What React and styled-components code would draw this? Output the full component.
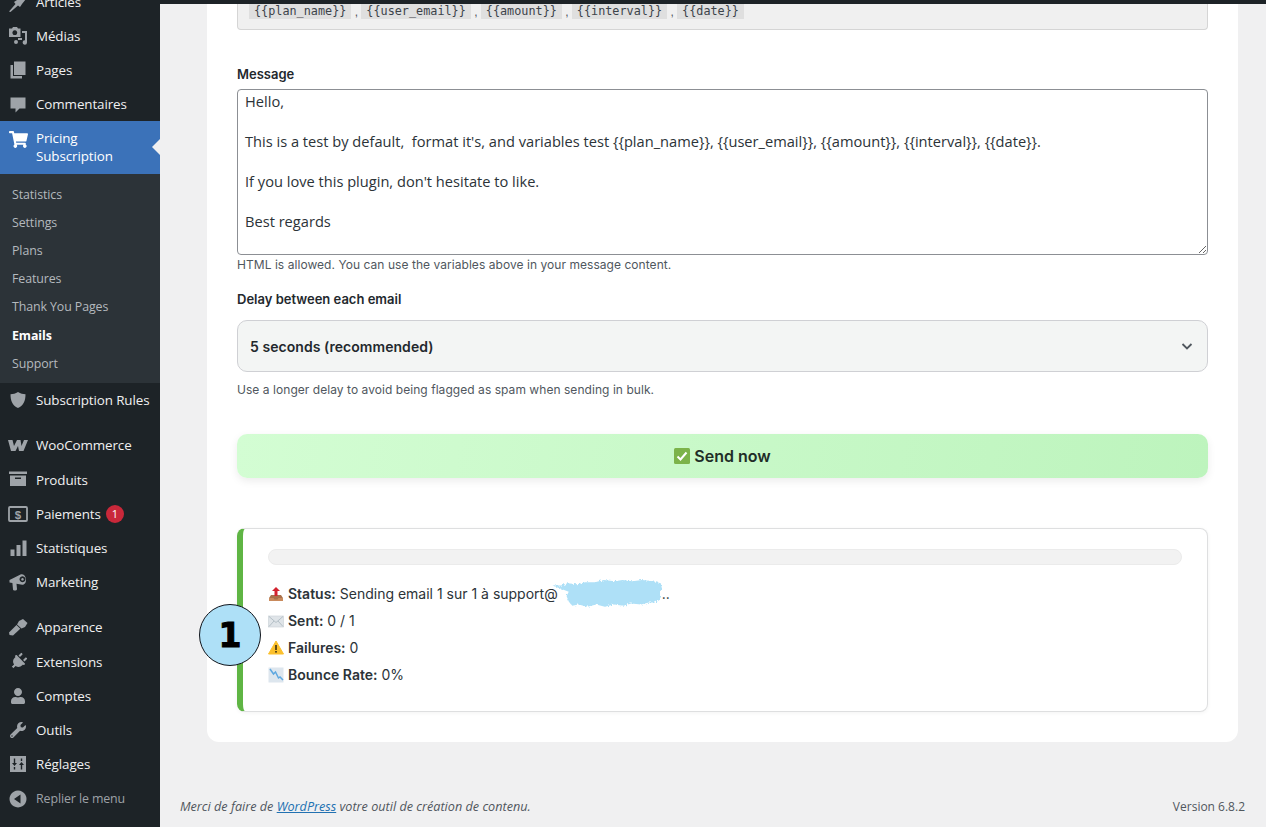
import React from 'react'
import styled, { createGlobalStyle } from 'styled-components'
import { FaShoppingCart, FaPlug, FaUser, FaWrench } from 'react-icons/fa'

const GlobalStyle = createGlobalStyle`
  html, body { margin: 0; padding: 0; height: 827px; overflow: hidden; background: #f0f0f1; }
  * { box-sizing: border-box; }
`

const ICON = '#9ea3a8'
const MENU_FONT = '"Open Sans", Roboto, sans-serif'

const Page = styled.div`
  display: flex;
  width: 1266px;
  height: 827px;
  overflow: hidden;
  background: #f0f0f1;
`

const Sidebar = styled.nav`
  flex: 0 0 160px;
  height: 827px;
  overflow: hidden;
  background: #1d2327;
  font-family: ${MENU_FONT};
`

const MenuList = styled.div`
  display: flex;
  flex-direction: column;
  margin-top: -15px;
`

const Item = styled.a`
  display: flex;
  align-items: center;
  height: ${({ $tall }) => ($tall ? '34.25px' : '34px')};
  flex: none;
  color: ${({ $muted }) => ($muted ? '#9da2a7' : '#f0f0f1')};
  font-size: ${({ $muted }) => ($muted ? '12.4px' : '13.4px')};
  letter-spacing: -0.1px;
  margin-top: ${({ $gap }) => ($gap ? '10.75px' : '0')};
`

const IconBox = styled.span`
  flex: 0 0 36px;
  display: flex;
  align-items: center;
  justify-content: center;
  color: ${ICON};
`

const PlugIcon = styled(FaPlug)`
  transform: rotate(45deg);
`

const ActiveItem = styled.a`
  position: relative;
  display: flex;
  height: 53px;
  padding-top: 8px;
  background: #3b72b9;
  color: #fff;
  font-size: 13.4px;
  line-height: 18px;
  letter-spacing: -0.1px;
  &::after {
    content: '';
    position: absolute;
    right: 0;
    top: 18px;
    border: 8px solid transparent;
    border-right-color: #f0f0f1;
    border-left-width: 0;
  }
`

const ActiveIcon = styled(IconBox)`
  color: #fff;
  align-items: flex-start;
  padding-top: 1px;
`

const SubMenu = styled.div`
  display: flex;
  flex-direction: column;
  padding: 6.7px 0 5.3px;
  background: #2c3338;
`

const SubItem = styled.a`
  height: 28.2px;
  line-height: 28.2px;
  padding-left: 12px;
  font-size: 12.4px;
  letter-spacing: -0.1px;
  color: ${({ $current }) => ($current ? '#fff' : '#b4b9be')};
  font-weight: ${({ $current }) => ($current ? 700 : 400)};
`

const Badge = styled.span`
  display: inline-flex;
  align-items: center;
  justify-content: center;
  width: 18px;
  height: 18px;
  margin-left: 5px;
  border-radius: 50%;
  background: #c9283a;
  color: #fff;
  font-size: 11px;
`

const Main = styled.main`
  flex: 1;
  display: flex;
  flex-direction: column;
  min-width: 0;
`

const TopBar = styled.div`
  flex: 0 0 4px;
  background: #1d2327;
`

const Content = styled.div`
  flex: 1;
  display: flex;
  flex-direction: column;
  padding: 0 28px 0 47px;
`

const Card = styled.section`
  display: flex;
  flex-direction: column;
  padding: 0 30px 30px;
  background: #fff;
  border-radius: 0 0 12px 12px;
  font-family: Inter, sans-serif;
  color: #23282d;
`

const Notice = styled.div`
  display: flex;
  align-items: flex-end;
  height: 26px;
  padding: 0 11px 10px;
  background: #f0f0f0;
  border: 1px solid #d5d5d5;
  border-top: 0;
  border-radius: 0 0 4px 4px;
  font-family: "Liberation Sans", sans-serif;
  font-size: 12px;
  color: #50575e;
  white-space: pre;
`

const Code = styled.code`
  padding: 2px 5px 3px;
  background: #dfdfdf;
  font-family: "DejaVu Sans Mono", monospace;
  font-size: 11.8px;
  line-height: 10px;
  color: #3c434a;
`

const Label = styled.label`
  display: block;
  font-size: 13px;
  font-weight: 600;
  line-height: 18px;
  color: #23282d;
  margin-top: ${({ $top }) => $top}px;
`

const MessageBox = styled.textarea`
  display: block;
  width: 100%;
  height: 166px;
  margin-top: 6px;
  padding: 1px 7px 3px;
  border: 1px solid #8c8f94;
  border-radius: 4px;
  outline: none;
  font-family: ${MENU_FONT};
  font-size: 14.63px;
  line-height: 20px;
  color: #2c3338;
  background: #fff;
`

const Hint = styled.p`
  margin: ${({ $top }) => $top}px 0 0;
  font-size: 12px;
  letter-spacing: 0.05px;
  line-height: 18px;
  color: #50575e;
`

const SelectBox = styled.div`
  display: flex;
  align-items: center;
  justify-content: space-between;
  height: 52px;
  margin-top: 12px;
  padding: 0 13px 0 12px;
  background: #f3f5f4;
  border: 1px solid #cfd0d4;
  border-radius: 10px;
  font-size: 14px;
  letter-spacing: 0.05px;
  font-weight: 600;
  color: #23282d;
`

const SendButton = styled.button`
  display: flex;
  align-items: center;
  justify-content: center;
  gap: 4px;
  width: 100%;
  height: 44px;
  margin-top: 35px;
  border: 0;
  border-radius: 10px;
  background: linear-gradient(100deg, #d3fdd3, #bdf4bd);
  box-shadow: 0 3px 8px rgba(0, 0, 0, 0.08);
  font-family: Inter, sans-serif;
  font-size: 16px;
  font-weight: 600;
  color: #1f2d27;
`

const ResultCard = styled.div`
  display: flex;
  flex-direction: column;
  height: 184px;
  margin-top: 50px;
  padding: 20px 25px 0;
  background: #fff;
  border: 1px solid #dedfe0;
  border-left: 6px solid #5fb544;
  border-radius: 8px;
  box-shadow: 0 1px 4px rgba(0, 0, 0, 0.05);
`

const Progress = styled.div`
  height: 16px;
  background: #f2f2f2;
  border: 1px solid #ebebeb;
  border-radius: 8px;
`

const StatusList = styled.div`
  position: relative;
  display: flex;
  flex-direction: column;
  margin-top: 15px;
`

const StatusRow = styled.div`
  display: flex;
  align-items: center;
  gap: 4px;
  height: 27px;
  font-size: 14px;
  color: #2c3338;
  white-space: pre;
  b { font-weight: 600; }
  svg { flex: none; }
`

const Smudge = styled.svg`
  display: inline-block;
  vertical-align: middle;
  margin: -12px -1px -12px -9px;
`

const StepBubble = styled.div`
  position: absolute;
  left: -69px;
  top: 24px;
  display: flex;
  align-items: center;
  justify-content: center;
  width: 62px;
  height: 62px;
  border: 1.5px solid #11151c;
  border-radius: 50%;
  background: #aee0f7;
  font-family: "DejaVu Sans", sans-serif;
  font-size: 33px;
  font-weight: 700;
  -webkit-text-stroke: 1px #000;
  color: #000;
`

const Footer = styled.footer`
  display: flex;
  justify-content: space-between;
  align-items: center;
  height: 20px;
  margin: 54px -7px 0 -27px;
  font-family: ${MENU_FONT};
  font-size: 12px;
  color: #50575e;
  em { font-size: 12.65px; }
  em a { color: #2271b1; text-decoration: underline; }
`

// dashicon style drawings, 20x20
const Dash = ({ children, size = 20 }) => (
  <svg width={size} height={size} viewBox="0 0 20 20" fill="currentColor">{children}</svg>
)

const icons = {
  post: <Dash><path d="M1 19.500l6.500-7.500-1.500-2 3-2 5-5 4 4-4 5-2 3-2-1.500-7.500 6.500z" /></Dash>,
  media: <Dash><path d="M1 2.5h3l1-1.5h4l1 1.5h2.5V11H1z M6.8 4.3a2.4 2.4 0 1 0 .01 0z" fillRule="evenodd" /><path d="M14 5h5v11.5a2.2 2.2 0 1 1-2-2.2V7h-3z M8 18a2 2 0 1 1 2-2 2 2 0 0 1-2 2z M10 12h4v2h-4z" /></Dash>,
  pages: <Dash><path d="M6 1.5h11.5V15H6z" /><path d="M2.5 5H5v11h9v2.5H2.5z" /></Dash>,
  comment: <Dash><path d="M2.500 3.500h15v11h-6l-4 4v-4h-5z" /></Dash>,
  shield: <Dash><path d="M10 2c2.5 1.6 5 2.2 7.5 2.2 0 6.5-1.8 11-7.5 13.8C4.300 15.200 2.500 10.700 2.500 4.200 5 4.200 7.500 3.600 10 2z" /></Dash>,
  woo: <svg width="20" height="11" viewBox="0 0 20 11" fill="currentColor"><path d="M0 0h4.500l1.500 6 3-6h3.500l1 6 2.500-6H20l-4.500 11H11l-1-5-2.500 5H3z" /></svg>,
  box: <Dash><path d="M1 1.500h18v2.500H1z" /><path d="M2 5.500h16v10.500H2z M7 7.500v1.500h6V7.500z" fillRule="evenodd" /></Dash>,
  pay: (
    <svg width="20" height="16" viewBox="0 0 20 16">
      <rect x="1" y="1" width="18" height="14" fill="none" stroke="currentColor" strokeWidth="1.800" rx="1" />
      <text x="10" y="12.500" textAnchor="middle" fontFamily="Liberation Sans" fontWeight="700" fontSize="11.500" fill="currentColor">$</text>
    </svg>
  ),
  stats: <Dash><path d="M2.500 11.500h4V18h-4z M8.500 7h4v11h-4z M14.500 2.500h4V18h-4z" /></Dash>,
  megaphone: <Dash><path d="M1.500 8l11-5.500c2.400-.8 5.300 1.300 5.500 4.800.2 3.300-1.500 5.700-3.800 5.500L8.500 11.800 9 17c0 1-1 1.500-2 1.500H6c-.6 0-1-.5-1-1.200l-.6-6.400-2.900-.4z M14.500 4.300a3 3 0 1 0 .01 0z M14.500 6a1.300 1.300 0 1 1-.01 0z" fillRule="evenodd" /></Dash>,
  brush: <Dash><path d="M11 4l4-2 4.500 4-2.500 4-3.500 1.500L9 7.500z" /><path d="M8.500 8l3.800 3.800L5 18.500l-3.500-.5-.5-2.500z" /></Dash>,
  settings: <Dash><path d="M2 2h16v16H2z M5.800 4.500v4.500H4l2.500 3 2.500-3H7.200V4.500z M5.800 13v2.500h1.400V13z M12.800 15.500h1.400V11H16l-2.500-3-2.500 3h1.800z M12.800 7h1.400V4.500h-1.400z" fillRule="evenodd" /></Dash>,
  collapse: <Dash><path d="M10 1.500a8.500 8.500 0 1 0 .01 0z M12.500 5.500v9L6 10z" fillRule="evenodd" /></Dash>
}

const OutboxIcon = () => (
  <svg width="16" height="16" viewBox="0 0 16 16">
    <path d="M3 9h10l2 3v3H1v-3z" fill="#a9714b" />
    <path d="M1 12h4.500l1 1.500h3l1-1.500H15v3H1z" fill="#c98a5c" />
    <path d="M8 1L12 5H9.500v5h-3V5H4z" fill="#d3232f" />
  </svg>
)

const EnvelopeIcon = () => (
  <svg width="16" height="14" viewBox="0 0 16 14">
    <rect x="0.500" y="2" width="15" height="11" fill="#dfe4e8" stroke="#cdd4d9" strokeWidth="0.700" />
    <path d="M1 2.500l7 6 7-6M1 12.500l5-5.500M15 12.500l-5-5.500" fill="none" stroke="#aab6be" strokeWidth="0.800" />
  </svg>
)

const WarningIcon = () => (
  <svg width="16" height="15" viewBox="0 0 16 15">
    <path d="M8 1l7.500 13H.5z" fill="#fbc02d" stroke="#fbc02d" strokeLinejoin="round" />
    <rect x="7.200" y="5" width="1.600" height="5" fill="#3b2f12" />
    <rect x="7.200" y="11" width="1.600" height="1.600" fill="#3b2f12" />
  </svg>
)

const ChartDownIcon = () => (
  <svg width="16" height="16" viewBox="0 0 16 16">
    <rect x="0.500" y="0.500" width="15" height="15" fill="#dde6ee" />
    <path d="M2 2l3.500 5 2-2 3 6 1.500-1 3 3" fill="none" stroke="#5fa8e0" strokeWidth="1.500" />
  </svg>
)

const CheckIcon = () => (
  <svg width="16" height="16" viewBox="0 0 16 16">
    <rect width="16" height="16" rx="1.500" fill="#7cb34a" />
    <path d="M3.500 8.500l3 3 6-7" fill="none" stroke="#fff" strokeWidth="2" />
  </svg>
)

const Chevron = () => (
  <svg width="14" height="14" viewBox="0 0 14 14" fill="none" stroke="#50575e" strokeWidth="1.800">
    <path d="M2.500 5l4.500 4.500L11.500 5" />
  </svg>
)

const RedactSmudge = () => (
  <Smudge width="114" height="32" viewBox="0 0 104 30" preserveAspectRatio="none">
    <filter id="rough" x="-5%" y="-20%" width="110%" height="140%">
      <feTurbulence type="fractalNoise" baseFrequency="0.55" numOctaves="2" seed="4" />
      <feDisplacementMap in="SourceGraphic" scale="4" />
    </filter>
    <path
      d="M3 6l8 0 6-2 9 1 7-2 9 0 8-2 10 1 7-1 9 1 9-1 10 1 7 2 1 5-2 4 1 6-5 3-6 0-7 2-9-1-7 2-9-1-8 2-8-2-8 2-8-2-6 1-3-4-2-5 2-4z"
      fill="#aee0f7"
      filter="url(#rough)"
    />
  </Smudge>
)

const topMenu = [
  { label: 'Articles', icon: 'post' },
  { label: 'Médias', icon: 'media' },
  { label: 'Pages', icon: 'pages' },
  { label: 'Commentaires', icon: 'comment' }
]

const subMenu = ['Statistics', 'Settings', 'Plans', 'Features', 'Thank You Pages', 'Emails', 'Support']

const restMenu = [
  { label: 'Subscription Rules', icon: icons.shield },
  { label: 'WooCommerce', icon: icons.woo, gap: true },
  { label: 'Produits', icon: icons.box },
  { label: 'Paiements', icon: icons.pay, badge: 1 },
  { label: 'Statistiques', icon: icons.stats },
  { label: 'Marketing', icon: icons.megaphone },
  { label: 'Apparence', icon: icons.brush, gap: true },
  { label: 'Extensions', icon: <PlugIcon size={17} /> },
  { label: 'Comptes', icon: <FaUser size={16} /> },
  { label: 'Outils', icon: <FaWrench size={16} /> },
  { label: 'Réglages', icon: icons.settings },
  { label: 'Replier le menu', icon: icons.collapse, muted: true }
]

const variables = ['{{plan_name}}', '{{user_email}}', '{{amount}}', '{{interval}}', '{{date}}']

const message = `Hello,

This is a test by default,  format it's, and variables test {{plan_name}}, {{user_email}}, {{amount}}, {{interval}}, {{date}}.

If you love this plugin, don't hesitate to like.

Best regards`

export default function App() {
  return (
    <Page>
      <GlobalStyle />
      <Sidebar>
        <MenuList>
          {topMenu.map((m) => (
            <Item key={m.label}>
              <IconBox>{icons[m.icon]}</IconBox>
              {m.label}
            </Item>
          ))}
          <ActiveItem>
            <ActiveIcon><FaShoppingCart size={19} /></ActiveIcon>
            <span>Pricing<br />Subscription</span>
          </ActiveItem>
          <SubMenu>
            {subMenu.map((s) => (
              <SubItem key={s} $current={s === 'Emails'}>{s}</SubItem>
            ))}
          </SubMenu>
          {restMenu.map((m) => (
            <Item key={m.label} $tall $gap={m.gap} $muted={m.muted}>
              <IconBox>{m.icon}</IconBox>
              {m.label}
              {m.badge && <Badge>{m.badge}</Badge>}
            </Item>
          ))}
        </MenuList>
      </Sidebar>
      <Main>
        <TopBar />
        <Content>
          <Card>
            <Notice>
              {variables.map((v, i) => (
                <React.Fragment key={v}>
                  <Code>{v}</Code>
                  {i < variables.length - 1 && ' , '}
                </React.Fragment>
              ))}
            </Notice>
            <Label $top={35}>Message</Label>
            <MessageBox defaultValue={message} spellCheck={false} />
            <Hint $top={1}>HTML is allowed. You can use the variables above in your message content.</Hint>
            <Label $top={16}>Delay between each email</Label>
            <SelectBox>
              5 seconds (recommended)
              <Chevron />
            </SelectBox>
            <Hint $top={9}>Use a longer delay to avoid being flagged as spam when sending in bulk.</Hint>
            <SendButton><CheckIcon /> Send now</SendButton>
            <ResultCard>
              <Progress />
              <StatusList>
                <StatusRow><OutboxIcon /><span><b>Status:</b> Sending email 1 sur 1 à support@<RedactSmudge />..</span></StatusRow>
                <StatusRow><EnvelopeIcon /><span><b>Sent:</b> 0 / 1</span></StatusRow>
                <StatusRow><WarningIcon /><span><b>Failures:</b> 0</span></StatusRow>
                <StatusRow><ChartDownIcon /><span><b>Bounce Rate:</b> 0%</span></StatusRow>
                <StepBubble>1</StepBubble>
              </StatusList>
            </ResultCard>
          </Card>
          <Footer>
            <em>Merci de faire de <a>WordPress</a> votre outil de création de contenu.</em>
            <span>Version 6.8.2</span>
          </Footer>
        </Content>
      </Main>
    </Page>
  )
}
